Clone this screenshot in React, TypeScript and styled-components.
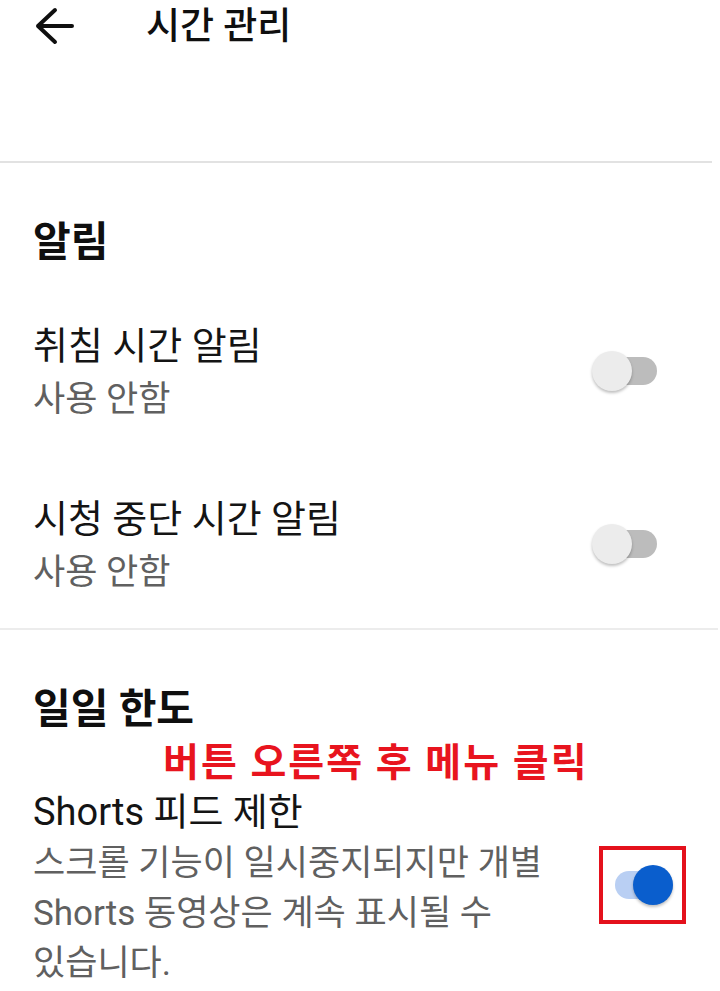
import React from "react";
import styled, { createGlobalStyle } from "styled-components";

const GlobalStyle = createGlobalStyle`
  html, body { margin: 0; padding: 0; background: #ffffff; }
  body {
    font-family: Roboto, "Noto Sans CJK KR", "Noto Sans", sans-serif;
    color: #0f0f0f;
    -webkit-font-smoothing: antialiased;
  }
  * { box-sizing: border-box; }
`;

const Page = styled.div`
  width: 720px;
  height: 991px;
  overflow: hidden;
  background: #fff;
`;

const Header = styled.header`
  width: 712px;
  height: 163px;
  border-bottom: 2px solid #e2e2e2;
`;

const TopBar = styled.div`
  height: 52px;
  display: flex;
  align-items: center;
  padding-left: 35px;
`;

const BackButton = styled.button`
  width: 40px;
  height: 40px;
  padding: 0;
  border: 0;
  background: transparent;
  display: flex;
  align-items: center;
  justify-content: center;
  color: #0f0f0f;
`;

const Title = styled.h1`
  margin: 0 0 0 71px;
  font-size: 37px;
  font-weight: 500;
  line-height: 1;
  letter-spacing: 0;
`;

const Section = styled.section<{ $divider?: boolean }>`
  width: 718px;
  padding: 56px 0 0 33px;
  border-bottom: ${(p) => (p.$divider ? "2px solid #ececec" : "0")};
`;

const SectionHeading = styled.h2`
  margin: 0;
  font-size: 41px;
  font-weight: 700;
  line-height: 46px;
`;

const Row = styled.div<{ $top: number; $bottom: number }>`
  display: flex;
  align-items: center;
  justify-content: space-between;
  padding: ${(p) => `${p.$top}px 0 ${p.$bottom}px`};
`;

const RowText = styled.div`
  display: flex;
  flex-direction: column;
  width: 540px;
`;

const RowTitle = styled.div`
  font-size: 38px;
  line-height: 54px;
  font-weight: 400;
  color: #141414;
  white-space: nowrap;
`;

const RowSub = styled.div`
  font-size: 35px;
  line-height: 54px;
  color: #606060;
`;

const ToggleWrap = styled.div<{ $shift: number }>`
  margin-right: ${(p) => p.$shift}px;
  margin-bottom: 5px;
  position: relative;
  width: 66px;
  height: 42px;
  display: flex;
  align-items: center;
`;

const Track = styled.div<{ $on: boolean }>`
  position: absolute;
  left: 7px;
  width: 58px;
  height: 28px;
  border-radius: 14px;
  background: ${(p) => (p.$on ? "#b9cff3" : "#bcbcbc")};
`;

const Thumb = styled.div<{ $on: boolean }>`
  position: absolute;
  left: ${(p) => (p.$on ? "25px" : "0")};
  width: 40px;
  height: 40px;
  border-radius: 50%;
  background: ${(p) => (p.$on ? "#0a5ecd" : "#ececec")};
  box-shadow: 0 2px 3px rgba(0, 0, 0, 0.25);
`;

const Highlight = styled.div`
  position: absolute;
  left: -9px;
  top: -18px;
  width: 87px;
  height: 78px;
  border: 4px solid #e4111c;
`;

const Annotation = styled.div`
  margin: 9px 0 0 130px;
  font-size: 39px;
  font-weight: 700;
  line-height: 44px;
  letter-spacing: 2px;
  color: #e8141e;
  white-space: nowrap;
`;

const Desc = styled.div`
  font-size: 35px;
  line-height: 50px;
  color: #606060;
  white-space: nowrap;
`;

function ArrowBack() {
  return (
    <svg width="40" height="40" viewBox="0 0 40 40" fill="none">
      <path
        d="M3 20 H37 M20 4 L3 20 L20 36"
        stroke="currentColor"
        strokeWidth="4"
        strokeLinecap="round"
        strokeLinejoin="round"
      />
    </svg>
  );
}

function Toggle({ on, shift = 0, boxed = false }: { on: boolean; shift?: number; boxed?: boolean }) {
  return (
    <ToggleWrap $shift={shift}>
      <Track $on={on} />
      <Thumb $on={on} />
      {boxed && <Highlight />}
    </ToggleWrap>
  );
}

export default function App() {
  return (
    <Page>
      <GlobalStyle />
      <Header>
        <TopBar>
          <BackButton aria-label="뒤로">
            <ArrowBack />
          </BackButton>
          <Title>시간 관리</Title>
        </TopBar>
      </Header>

      <Section $divider>
        <SectionHeading>알림</SectionHeading>
        <Row $top={54} $bottom={32}>
          <RowText>
            <RowTitle>취침 시간 알림</RowTitle>
            <RowSub>사용 안함</RowSub>
          </RowText>
          <Toggle on={false} shift={60} />
        </Row>
        <Row $top={33} $bottom={28}>
          <RowText>
            <RowTitle>시청 중단 시간 알림</RowTitle>
            <RowSub>사용 안함</RowSub>
          </RowText>
          <Toggle on={false} shift={60} />
        </Row>
      </Section>

      <Section>
        <SectionHeading>일일 한도</SectionHeading>
        <Annotation>버튼 오른쪽 후 메뉴 클릭</Annotation>
        <Row $top={0} $bottom={0}>
          <RowText>
            <RowTitle>Shorts 피드 제한</RowTitle>
            <Desc>
              스크롤 기능이 일시중지되지만 개별
              <br />
              Shorts 동영상은 계속 표시될 수
              <br />
              있습니다.
            </Desc>
          </RowText>
          <Toggle on shift={44} boxed />
        </Row>
      </Section>
    </Page>
  );
}
